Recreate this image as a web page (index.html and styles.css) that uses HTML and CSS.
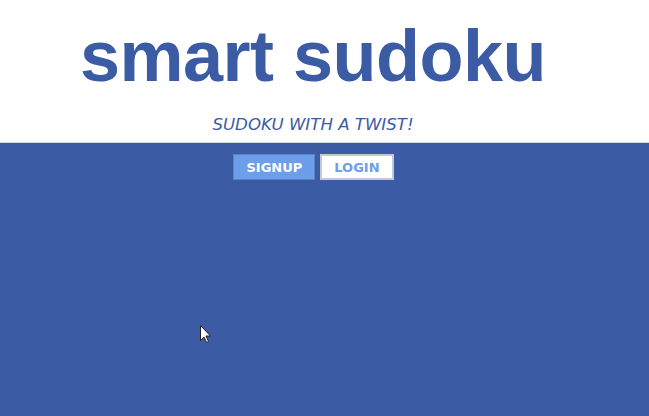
FILE: index.html
```html
<!DOCTYPE html>
<html>
<head>
<meta charset="utf-8">
<link rel="stylesheet" href="styles.css">
</head>
<body>
<header class="hero">
  <h1 class="title">smart sudoku</h1>
  <p class="tagline">SUDOKU WITH A TWIST!</p>
</header>
<main class="main">
  <div class="actions">
    <button class="btn btn-signup">SIGNUP</button>
    <button class="btn btn-login">LOGIN</button>
  </div>
</main>
<svg class="cursor" width="12" height="19" viewBox="0 0 12 19">
  <path d="M0.5 0.5 L0.5 15.5 L4 12 L6.5 17.5 L8.5 16.5 L6 11 L10.5 11 Z" fill="#fff" stroke="#222" stroke-width="1"/>
</svg>
</body>
</html>
```
FILE: styles.css
```css
html, body {
  margin: 0;
  padding: 0;
  height: 100%;
}
body {
  display: flex;
  flex-direction: column;
  background: #3b5ba5;
  font-family: "DejaVu Sans", Verdana, sans-serif;
  overflow: hidden;
}
.hero {
  background: #fff;
  height: 143px;
  display: flex;
  flex-direction: column;
  align-items: center;
  padding-right: 23px;
  box-sizing: border-box;
  border-bottom: 1px solid #d8dde8;
}
.title {
  margin: 12px 0 0;
  font-family: "Liberation Sans", Arial, sans-serif;
  font-weight: bold;
  font-size: 72px;
  line-height: 88px;
  color: #3b5ba5;
  letter-spacing: -0.5px;
}
.tagline {
  margin: 16px 0 0;
  font-style: italic;
  font-size: 16.6px;
  color: #3b5ba5;
  line-height: 18px;
}
.main {
  flex: 1;
  display: flex;
  flex-direction: column;
  align-items: center;
  padding-right: 22px;
  padding-top: 11px;
}
.actions {
  display: flex;
  gap: 5px;
}
.btn {
  font-family: "DejaVu Sans", Verdana, sans-serif;
  font-weight: bold;
  font-size: 13px;
  height: 26px;
  padding: 0 12px;
  box-sizing: border-box;
  cursor: pointer;
}
.btn-signup {
  background: #6d9eeb;
  color: #fff;
  border: 1px solid #5b82c6;
}
.btn-login {
  background: #fff;
  color: #6d9eeb;
  border: 2px solid #c3c9d6;
}
.cursor {
  position: absolute;
  left: 200px;
  top: 325px;
}
```
